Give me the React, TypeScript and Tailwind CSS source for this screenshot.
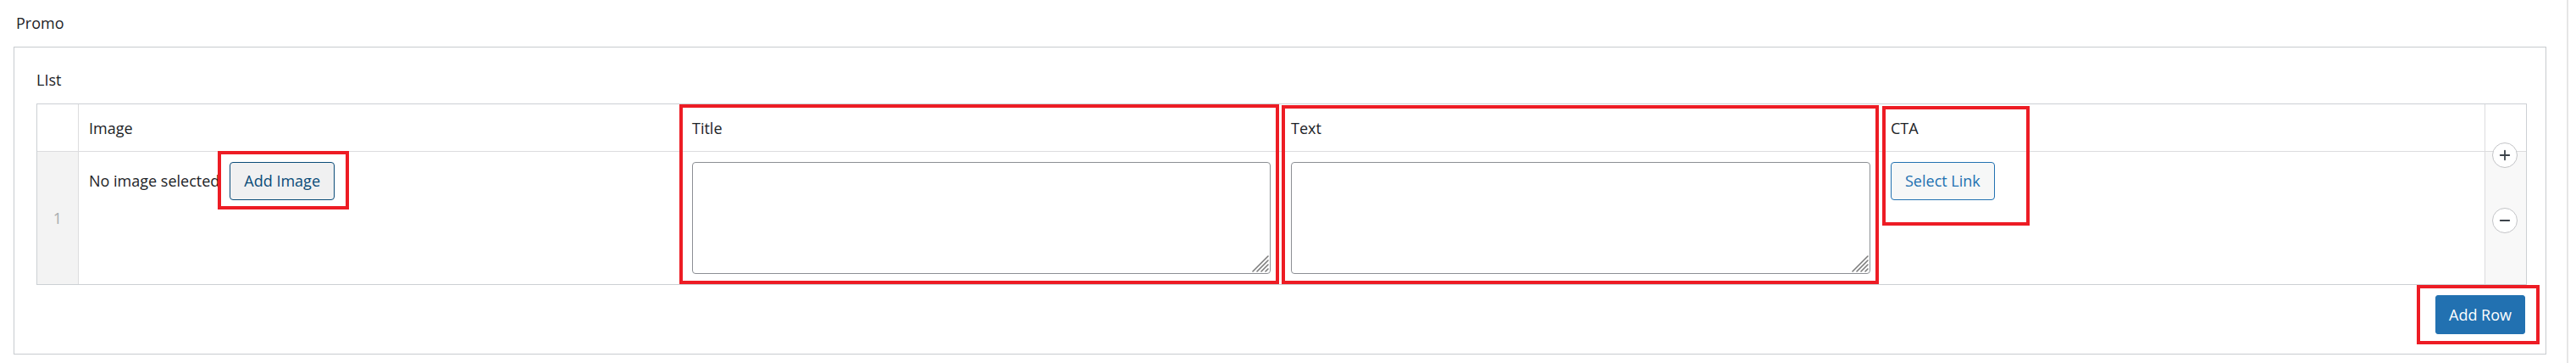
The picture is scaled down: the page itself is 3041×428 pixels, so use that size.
import { Minus, Plus } from "lucide-react";

const columns = ["Image", "Title", "Text", "CTA"];

// red annotation frames drawn over the screenshot
const marks = [
  "left-[257px] top-[178px] w-[155px] h-[69px]",
  "left-[802px] top-[123px] w-[708px] h-[212px]",
  "left-[1513px] top-[124px] w-[705px] h-[211px]",
  "left-[2222px] top-[125px] w-[174px] h-[141px]",
  "left-[2853px] top-[336px] w-[145px] h-[70px]",
];

function TextBox() {
  return (
    <div className="relative">
      <textarea className="block h-[132px] w-full resize-none rounded-[4px] border border-[#8c8f94] bg-white" />
      <svg
        className="pointer-events-none absolute bottom-[2px] right-[2px]"
        width="21"
        height="21"
        viewBox="0 0 21 21"
        stroke="#7c7c7c"
        strokeWidth="1.6"
        strokeLinecap="round"
      >
        <line x1="20" y1="2" x2="2" y2="20" />
        <line x1="20" y1="7" x2="7" y2="20" />
        <line x1="20" y1="12" x2="12" y2="20" />
        <line x1="20" y1="17" x2="17" y2="20" />
      </svg>
    </div>
  );
}

export default function App() {
  return (
    <div className="relative flex h-[428px] bg-white font-['Open_Sans',sans-serif] text-[18px] leading-[25px] text-[#1d2327]">
      <div className="w-[3032px] border-r-2 border-[#e6e6e6]">
        <div className="pl-[19px] pt-[15px]">Promo</div>

        <div className="ml-[16px] mt-[15px] w-[2990px] border border-[#c8cbcf] pl-[26px] pt-[26px] pb-[23px]">
          <div>LIst</div>

          <div className="mt-[15px] w-[2940px]">
            <div className="grid grid-cols-[49px_712px_707px_708px_1fr_49px] border border-[#ccd0d4]">
              {/* header row */}
              <div className="h-[56px] border-r border-b border-[#dcdcde]" />
              {columns.map((c) => (
                <div key={c} className="h-[56px] border-b border-[#dcdcde] px-[12px] pt-[16px]">
                  {c}
                </div>
              ))}
              <div className="h-[56px] border-l border-b border-[#dcdcde]" />

              {/* row 1 */}
              <div className="flex h-[156px] items-center justify-center border-r border-[#dcdcde] bg-[#f3f3f3] text-[#a7aaad]">
                1
              </div>
              <div className="flex items-start px-[12px] pt-[12px]">
                <div className="flex h-[45px] items-center gap-[12px]">
                  <span>No image selected</span>
                  <button className="h-[45px] rounded-[4px] border border-[#0a4b78] bg-[#f0f0f1] px-[16px] text-[#0a4b78]">
                    Add Image
                  </button>
                </div>
              </div>
              <div className="px-[12px] pt-[12px]">
                <TextBox />
              </div>
              <div className="px-[12px] pt-[12px]">
                <TextBox />
              </div>
              <div className="px-[12px] pt-[12px]">
                <button className="h-[45px] rounded-[4px] border border-[#2271b1] bg-[#f6f7f7] px-[16px] text-[#2271b1]">
                  Select Link
                </button>
              </div>
              <div className="relative border-l border-[#dcdcde] bg-[#f8f8f8]">
                <button className="absolute left-[8px] top-[-11px] flex h-[30px] w-[30px] items-center justify-center rounded-full border border-[#c3c4c7] bg-white text-[#3c434a]">
                  <Plus size={18} strokeWidth={2.4} />
                </button>
                <button className="absolute left-[8px] top-[66px] flex h-[30px] w-[30px] items-center justify-center rounded-full border border-[#c3c4c7] bg-white text-[#3c434a]">
                  <Minus size={18} strokeWidth={2.4} />
                </button>
              </div>
            </div>

            <div className="mt-[12px] flex justify-end pr-[2px]">
              <button className="h-[46px] rounded-[3px] border border-[#2271b1] bg-[#2271b1] px-[15px] text-white">
                Add Row
              </button>
            </div>
          </div>
        </div>
      </div>

      {marks.map((m) => (
        <div key={m} className={`pointer-events-none absolute border-[4px] border-[#ed1c24] ${m}`} />
      ))}
    </div>
  );
}
